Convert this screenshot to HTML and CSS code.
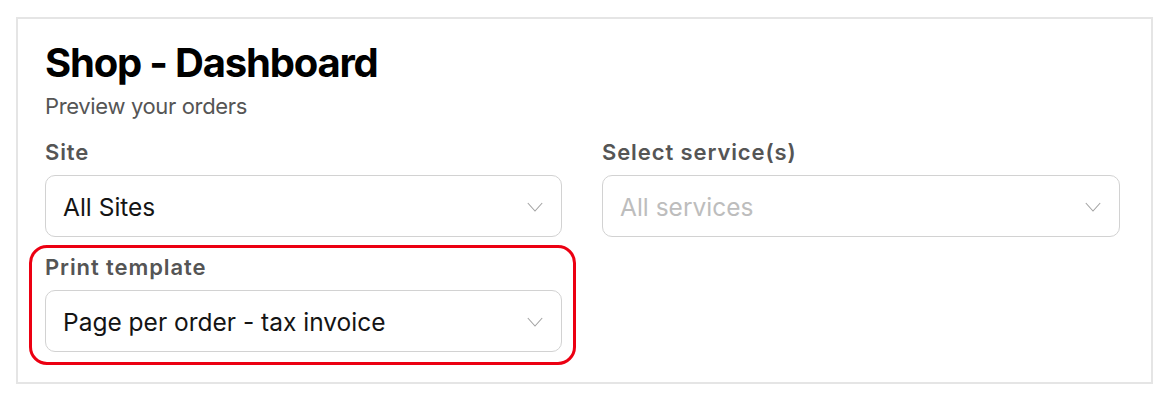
FILE: index.html
```html
<!DOCTYPE html>
<html>
<head>
<meta charset="utf-8">
<link rel="stylesheet" href="styles.css">
</head>
<body>
<div class="panel">
  <h1 class="title">Shop - Dashboard</h1>
  <p class="subtitle">Preview your orders</p>
  <div class="grid">
    <div class="field">
      <div class="label">Site</div>
      <div class="select">
        <span class="value">All Sites</span>
        <svg class="chev" width="16" height="10" viewBox="0 0 16 10"><path d="M0.8 1 L8 9 L15.2 1" fill="none" stroke="#a3a3a3" stroke-width="1.1"/></svg>
      </div>
    </div>
    <div class="field">
      <div class="label">Select service(s)</div>
      <div class="select">
        <span class="value placeholder">All services</span>
        <svg class="chev" width="16" height="10" viewBox="0 0 16 10"><path d="M0.8 1 L8 9 L15.2 1" fill="none" stroke="#a3a3a3" stroke-width="1.1"/></svg>
      </div>
    </div>
    <div class="field highlighted">
      <div class="label">Print template</div>
      <div class="select">
        <span class="value">Page per order - tax invoice</span>
        <svg class="chev" width="16" height="10" viewBox="0 0 16 10"><path d="M0.8 1 L8 9 L15.2 1" fill="none" stroke="#a3a3a3" stroke-width="1.1"/></svg>
      </div>
    </div>
  </div>
</div>
</body>
</html>
```
FILE: styles.css
```css
* { box-sizing: border-box; }
body {
  margin: 0;
  background: #ffffff;
  font-family: Inter, "Liberation Sans", sans-serif;
}
.panel {
  margin: 17px 0 0 16px;
  width: 1137px;
  height: 367px;
  border: 2px solid #e5e5e5;
  padding: 20px 31px 0 27px;
}
.title {
  margin: 0;
  font-size: 40px;
  line-height: 48px;
  font-weight: 700;
  color: #000;
  letter-spacing: -1.2px;
}
.subtitle {
  margin: 5px 0 0;
  font-size: 22px;
  line-height: 28px;
  color: #555;
  letter-spacing: -0.35px;
}
.grid {
  margin-top: 19px;
  display: grid;
  grid-template-columns: 517px 518px;
  column-gap: 40px;
  row-gap: 17px;
}
.field { position: relative; }
.label {
  font-size: 22px;
  line-height: 26px;
  font-weight: 600;
  color: #555;
  letter-spacing: 0.9px;
  margin-bottom: 10px;
}
.select {
  height: 62px;
  border: 1px solid #d2d2d2;
  border-radius: 10px;
  display: flex;
  align-items: center;
  justify-content: space-between;
  padding: 1px 18px 0 17px;
}
.value {
  font-size: 24.5px;
  color: #141414;
}
.value.placeholder { color: #bdbdbd; }
.chev { display: block; }
.highlighted::after {
  content: "";
  position: absolute;
  left: -16px;
  right: -14px;
  top: -9px;
  bottom: -13px;
  border: 3px solid #ec0012;
  border-radius: 18px;
  pointer-events: none;
}
```
